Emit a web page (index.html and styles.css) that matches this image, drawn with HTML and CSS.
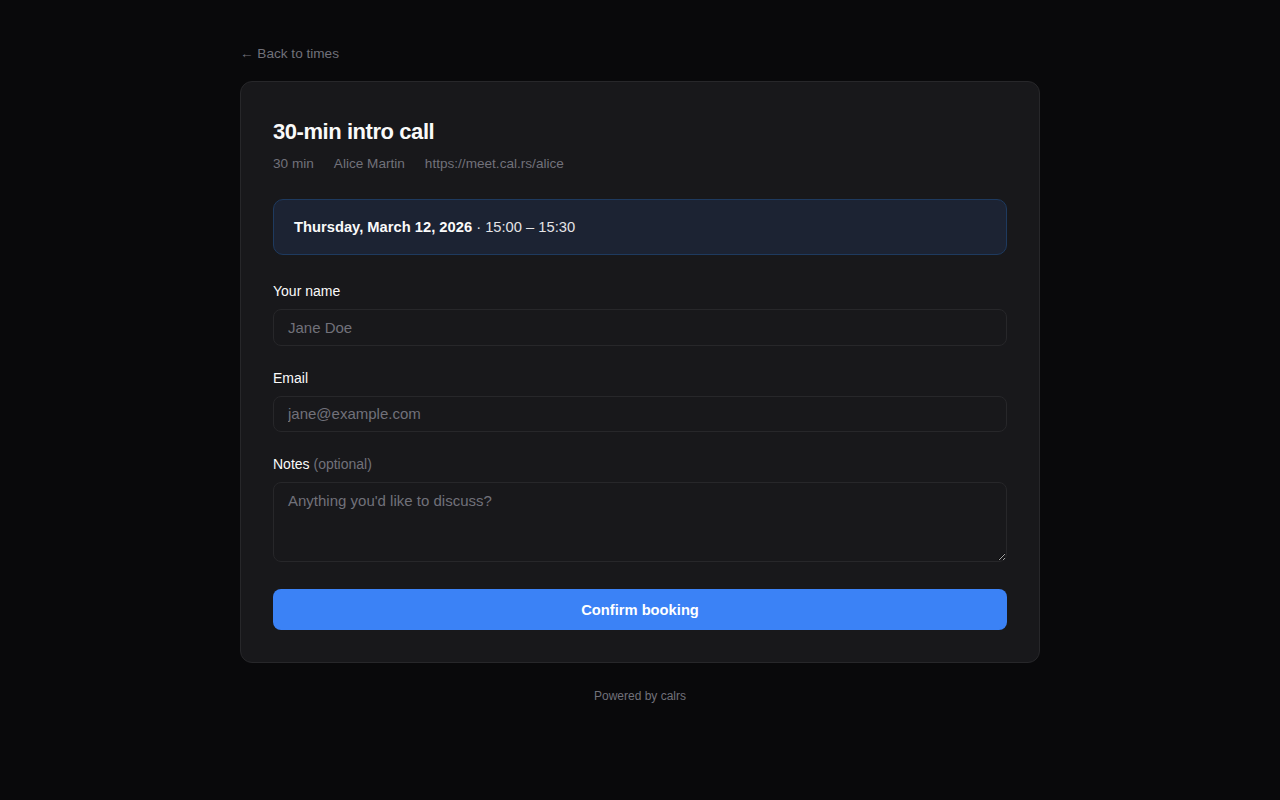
FILE: index.html
```html
<!DOCTYPE html>
<html lang="en">
<head>
<meta charset="utf-8">
<title>30-min intro call</title>
<link rel="stylesheet" href="styles.css">
</head>
<body>
<main class="page">
  <a class="back" href="#"><span class="arrow">←</span> Back to times</a>
  <section class="card">
    <h1 class="title">30-min intro call</h1>
    <div class="meta">
      <span>30 min</span>
      <span>Alice Martin</span>
      <span>https://meet.cal.rs/alice</span>
    </div>
    <div class="slot"><strong>Thursday, March 12, 2026</strong> · 15:00 – 15:30</div>
    <form class="form">
      <div class="field">
        <label class="label" for="name">Your name</label>
        <input class="input" id="name" type="text" placeholder="Jane Doe">
      </div>
      <div class="field">
        <label class="label" for="email">Email</label>
        <input class="input" id="email" type="email" placeholder="jane@example.com">
      </div>
      <div class="field">
        <label class="label" for="notes">Notes <span class="opt">(optional)</span></label>
        <textarea class="input textarea" id="notes" placeholder="Anything you'd like to discuss?"></textarea>
      </div>
      <button class="btn" type="button">Confirm booking</button>
    </form>
  </section>
  <footer class="footer">Powered by calrs</footer>
</main>
</body>
</html>
```

FILE: styles.css
```css
* { box-sizing: border-box; }
html, body { margin: 0; padding: 0; }
body {
  background: #09090b;
  color: #fafafa;
  font-family: "Liberation Sans", Arial, Helvetica, sans-serif;
}
.page {
  width: 800px;
  margin: 0 auto;
  padding-top: 44px;
}
.back {
  display: block;
  width: max-content;
  font-size: 13.6px;
  line-height: 20px;
  color: #71717a;
  text-decoration: none;
  margin-bottom: 17px;
}
.arrow { font-size: 13.6px; }
.card {
  background: #18181b;
  border: 1px solid #27272a;
  border-radius: 12px;
  padding: 32px;
}
.title {
  margin: 0;
  font-size: 22px;
  font-weight: 700;
  line-height: 35px;
  letter-spacing: -0.02em;
  color: #fafafa;
}
.meta {
  display: flex;
  gap: 20px;
  margin-top: 5px;
  font-size: 13.6px;
  line-height: 20px;
  color: #71717a;
}
.slot {
  margin-top: 25px;
  background: #1c2333;
  border: 1px solid #1e3a5f;
  border-radius: 10px;
  padding: 16px 20px;
  font-size: 14.72px;
  line-height: 22px;
  color: #e4e4e7;
}
.slot strong { color: #fafafa; font-weight: 700; }
.form {
  display: flex;
  flex-direction: column;
  margin-top: 26px;
}
.field {
  display: flex;
  flex-direction: column;
  margin-bottom: 22px;
}
.field:last-of-type { margin-bottom: 27px; }
.label {
  font-size: 14px;
  line-height: 20px;
  color: #fafafa;
  margin-bottom: 8px;
}
.opt { color: #71717a; }
.input {
  width: 100%;
  height: 36.5px;
  background: #18181b;
  border: 1px solid #27272a;
  border-radius: 8px;
  padding: 0 14px;
  font-family: inherit;
  font-size: 15px;
  color: #fafafa;
  outline: none;
}
.input::placeholder { color: #71717a; }
.textarea {
  height: 80px;
  padding: 8px 14px;
  line-height: 20px;
  resize: vertical;
  display: block;
}
.btn {
  width: 100%;
  height: 41px;
  border: 0;
  border-radius: 8px;
  background: #3b82f6;
  color: #ffffff;
  font-family: inherit;
  font-size: 14.72px;
  font-weight: 700;
  cursor: pointer;
}
.footer {
  text-align: center;
  margin-top: 25px;
  font-size: 12px;
  line-height: 16px;
  color: #71717a;
}
```
